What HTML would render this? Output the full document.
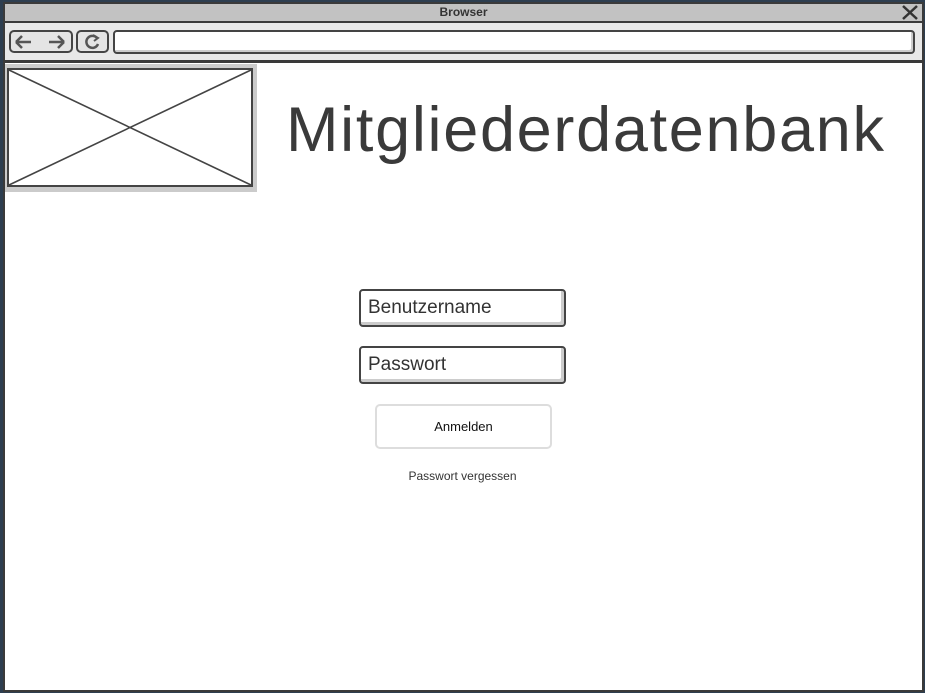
<!DOCTYPE html>
<html><head><style>
body{margin:0;width:925px;height:693px;background:#2d3e50;position:relative;overflow:hidden;font-family:"Liberation Sans",sans-serif;color:#333}
.win{position:absolute;left:3px;top:2px;width:917px;height:686px;border:2px solid #3a3a3a;background:#fff}
.title{position:absolute;left:0;top:0;width:917px;height:17px;background:#c2c2c2;border-bottom:2px solid #3a3a3a;font-size:12px;font-weight:bold;text-align:center;line-height:17px}
.tb{position:absolute;left:0;top:19px;width:917px;height:37px;background:#e8e8e8;border-bottom:3px solid #3a3a3a}
.btn{position:absolute;top:7px;height:23px;border:2px solid #444;border-radius:5px;background:#e4e4e4;box-sizing:border-box}
.url{position:absolute;left:108px;top:7px;width:802px;height:24px;border:2px solid #444;border-radius:4px;background:#fff;box-sizing:border-box;box-shadow:inset -2px -2px 0 #ccc}
.img{position:absolute;left:0;top:60px;width:252px;height:128px;background:#cbcbcb}
.h1{position:absolute;left:281px;top:90px;font-size:63px;color:#3a3a3a;letter-spacing:1.7px}
.inp{position:absolute;left:354px;width:207px;height:38px;border:2px solid #444;border-radius:4px;box-sizing:border-box;box-shadow:inset -3px -3px 0 #ccc;font-size:19px;padding-left:7px;line-height:34px}
.sub{position:absolute;left:370px;top:400px;width:177px;height:45px;border:2px solid #ddd;border-radius:5px;box-sizing:border-box;text-align:center;line-height:41px;font-size:13px;color:#111}
.link{position:absolute;left:355px;width:205px;top:465px;text-align:center;font-size:12px}
</style></head><body>
<div class="win">
<div class="title">Browser
<svg style="position:absolute;right:4px;top:1px" width="16" height="15"><path d="M1 1L15 14M15 1L1 14" stroke="#333" stroke-width="2.5"/></svg></div>
<div class="tb">
<div class="btn" style="left:4px;width:64px"><svg width="60" height="19"><path d="M5 10H20M5 10L11 4M5 10L11 16M38 10H53M53 10L47 4M53 10L47 16" stroke="#555" stroke-width="2.5" fill="none"/></svg></div>
<div class="btn" style="left:71px;width:33px"><svg width="29" height="19"><path d="M19 6A6 6 0 1 0 20 12" stroke="#555" stroke-width="2.5" fill="none"/><path d="M15 3L20 6L16 9" stroke="#555" stroke-width="2" fill="none"/></svg></div>
<div class="url"></div>
</div>
<div class="img"><svg style="position:absolute;left:2px;top:4px" width="246" height="119"><rect x="1" y="1" width="244" height="117" fill="#fff" stroke="#444" stroke-width="2"/><path d="M2 2L244 117M244 2L2 117" stroke="#444" stroke-width="1.6"/></svg></div>
<div class="h1">Mitgliederdatenbank</div>
<div class="inp" style="top:285px">Benutzername</div>
<div class="inp" style="top:342px">Passwort</div>
<div class="sub">Anmelden</div>
<div class="link">Passwort vergessen</div>
</div>
</body></html>
